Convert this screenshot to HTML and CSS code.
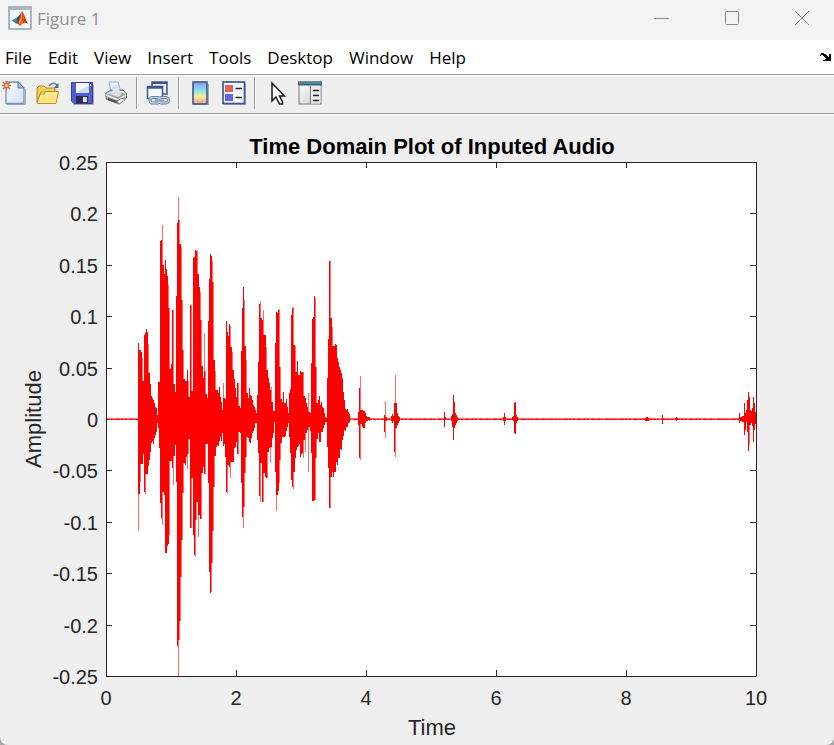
FILE: index.html
```html
<!DOCTYPE html>
<html lang="en">
  <head>
    <meta charset="utf-8">
    <title>Figure 1</title>
    <link rel="stylesheet" href="styles.css">
  </head>
  <body>
    <div class="window">

      <header class="titlebar">
        <svg class="logo" viewBox="0 0 24 24" aria-hidden="true">
          <defs>
            <linearGradient id="flame" x1="0" y1="0" x2="1" y2="0">
              <stop offset="0" stop-color="#7a1c10"/>
              <stop offset=".45" stop-color="#e8691c"/>
              <stop offset=".7" stop-color="#d43a12"/>
              <stop offset="1" stop-color="#a3200c"/>
            </linearGradient>
          </defs>
          <rect x="1" y="1" width="22" height="22" fill="#f4f6f8" stroke="#8f9aa8" stroke-width="1.4"/>
          <path d="M2 3h20" stroke="#a9b8ca" stroke-width="2"/>
          <path d="M3.500 14.500 9 11.500 12.500 9 10.500 16 8 17.500Z" fill="#3f7fb5"/>
          <path d="M9 11.500Q12 10 14 5.500L12 15 9.500 16Z" fill="#25507c"/>
          <path d="M14 5C16 7 17.500 13 20 18 17.500 16 15.500 16 12 20 11 18.500 9.500 17 8 17.500 11 15 12 9 14 5Z" fill="url(#flame)"/>
          <path d="M14 6.500Q14.500 12 12 18L10.500 17Q13 13 14 6.500Z" fill="#f8a13a"/>
        </svg>
        <h1 class="caption">Figure 1</h1>
        <div class="window-buttons">
          <button type="button" aria-label="Minimize">
            <svg viewBox="0 0 16 16"><path d="M0 8.500h15"/></svg>
          </button>
          <button type="button" aria-label="Maximize">
            <svg viewBox="0 0 16 16"><rect x="1.500" y="1.500" width="13" height="13" rx="1"/></svg>
          </button>
          <button type="button" aria-label="Close">
            <svg viewBox="0 0 16 16"><path d="M1 1l14 14M15 1L1 15"/></svg>
          </button>
        </div>
      </header>

      <nav class="menubar">
        <button type="button">File</button>
        <button type="button">Edit</button>
        <button type="button">View</button>
        <button type="button">Insert</button>
        <button type="button">Tools</button>
        <button type="button">Desktop</button>
        <button type="button">Window</button>
        <button type="button">Help</button>
        <button type="button" class="dock" aria-label="Dock figure">
          <svg viewBox="0 0 12 9"><path d="M0 3V2L1 1V0H4V1H6V2H7V3H8V4H9V1H11V8H3V7H5V6H6V5H5V4H4V3H3V2H1V3Z"/></svg>
        </button>
      </nav>

      <div class="toolbar" role="toolbar" aria-label="Figure toolbar">
        <button type="button" aria-label="New figure">
          <svg viewBox="0 0 24 24">
            <defs>
              <linearGradient id="sheet" x1="0" y1="0" x2="1" y2="1">
                <stop offset="0" stop-color="#fff"/><stop offset="1" stop-color="#cfe0f6"/>
              </linearGradient>
            </defs>
            <path d="M5 23.500H23.500V8" fill="none" stroke="#a8abb4"/>
            <path d="M4 1H16L22 7V22.500H4Z" fill="url(#sheet)" stroke="#7393bb" stroke-width="1.300"/>
            <path d="M16 1V7H22Z" fill="#9db9dd" stroke="#5878a4"/>
            <path d="M4.500 0V9M0 4.500H9M1 1L8 8M8 1L1 8" stroke="#dd7447" stroke-width="1.600"/>
            <circle cx="4.500" cy="4.500" r="2.200" fill="#ffc181" stroke="#d4622f"/>
          </svg>
        </button>
        <button type="button" aria-label="Open file">
          <svg viewBox="0 0 24 24">
            <path d="M13 5Q17 0 21 4" fill="none" stroke="#60809c" stroke-width="1.600"/>
            <path d="M22.500 2V7H17.500Z" fill="#496984"/>
            <path d="M1 21V7L3 5H8L10 7H19V11H5Z" fill="#f1cf56" stroke="#b58a20"/>
            <path d="M1 22L4 13H8L10 10.500H22.500L20 22.500H2Z" fill="#ffe681" stroke="#bd932b"/>
            <path d="M4 20L6 14.500H9L11 12H20" fill="none" stroke="#fff5b8"/>
          </svg>
        </button>
        <button type="button" aria-label="Save figure">
          <svg viewBox="0 0 24 24">
            <path d="M3 23.500H23.500V4" fill="none" stroke="#aaa"/>
            <path d="M1.500 1.500H22.500V22.500H4L1.500 20Z" fill="#555bd0" stroke="#333b9b"/>
            <path d="M6 2H19V12H6Z" fill="#f2f8ff"/>
            <path d="M6 12L19 4V12Z" fill="#cadcf3"/>
            <path d="M6 15H18V22H6Z" fill="#292b57"/>
            <path d="M13 16H17V21H13Z" fill="#e7edf6"/>
            <path d="M20 3H21V5H20Z" fill="#fff"/>
          </svg>
        </button>
        <button type="button" aria-label="Print figure">
          <svg viewBox="0 0 24 24">
            <path d="M5 1H14L17 11H7Z" fill="#f1f6ff" stroke="#91a5ca"/>
            <path d="M2 12L7 9H19L22.500 12V17L15 23 2 18Z" fill="#a0a1a4" stroke="#6f7175"/>
            <path d="M2 12L8 10H19L22 12 14 16Z" fill="#dcdcdc"/>
            <path d="M7 4H14L16 11H9Z" fill="#d5e3fb"/>
            <path d="M2 14L14 19 22 14" fill="none" stroke="#ededed" stroke-width="1.500"/>
            <path d="M4 18L13 21" stroke="#4b4d52" stroke-width="2"/>
            <path d="M13 20L18 17 21 19 15 23Z" fill="#f7f7f7" stroke="#888"/>
            <path d="M17 14L20 13" stroke="#85b65b" stroke-width="2"/>
          </svg>
        </button>
        <span class="separator"></span>
        <button type="button" aria-label="Link plot">
          <svg viewBox="0 0 24 24">
            <rect x="6" y="1" width="15" height="12" fill="#e8edf5" stroke="#3d5688" stroke-width="1.500"/>
            <path d="M6 2H21" stroke="#3d5688" stroke-width="2"/>
            <rect x="1.500" y="5.500" width="15" height="12" fill="#f7f9fc" stroke="#3d5688" stroke-width="1.500"/>
            <path d="M1.500 6.500H16.500" stroke="#3d5688" stroke-width="2.500"/>
            <rect x="4" y="16.500" width="10" height="5.500" rx="2.750" fill="#e4ebf4" stroke="#586f92" stroke-width="3"/>
            <rect x="13" y="16.500" width="9.500" height="5.500" rx="2.750" fill="#e4ebf4" stroke="#586f92" stroke-width="3"/>
            <rect x="4" y="16.500" width="10" height="5.500" rx="2.750" fill="none" stroke="#bdcee3" stroke-width="1.400"/>
            <rect x="13" y="16.500" width="9.500" height="5.500" rx="2.750" fill="none" stroke="#bdcee3" stroke-width="1.400"/>
            <path d="M9 19.200H18" stroke="#8ea6c6" stroke-width="2"/>
          </svg>
        </button>
        <span class="separator"></span>
        <button type="button" aria-label="Insert colorbar">
          <svg viewBox="0 0 24 24">
            <defs>
              <linearGradient id="bar" x1="0" y1="0" x2="0" y2="1">
                <stop offset="0" stop-color="#9195ed"/><stop offset=".35" stop-color="#83dff0"/>
                <stop offset=".65" stop-color="#f3f29b"/><stop offset="1" stop-color="#f39b86"/>
              </linearGradient>
            </defs>
            <path d="M6 24H20.500V3" fill="none" stroke="#aaa"/>
            <rect x="5" y="1" width="14" height="22" fill="url(#bar)" stroke="#3e5890" stroke-width="1.600"/>
          </svg>
        </button>
        <button type="button" aria-label="Insert legend">
          <svg viewBox="0 0 24 24">
            <path d="M2 23.500H23.500V3" fill="none" stroke="#aaa"/>
            <rect x="1" y="1" width="21.500" height="21.500" fill="#f5f8ff" stroke="#3e5890" stroke-width="1.700"/>
            <rect x="3" y="4" width="8" height="7" fill="#e56162"/>
            <rect x="3" y="13" width="8" height="7" fill="#6265e5"/>
            <path d="M13.500 7.500H20M13.500 16.500H20" stroke="#222" stroke-width="1.500"/>
          </svg>
        </button>
        <span class="separator"></span>
        <button type="button" aria-label="Edit plot">
          <svg viewBox="0 0 24 24">
            <path d="M8 2V20L12 16 15.500 23H18.500V21L15.500 15H20.500Z" fill="#fff" stroke="#171717" stroke-width="1.500"/>
          </svg>
        </button>
        <button type="button" aria-label="Open property inspector">
          <svg viewBox="0 0 24 24">
            <defs>
              <linearGradient id="pane" x1="0" y1="0" x2="1" y2="1">
                <stop offset="0" stop-color="#fff"/><stop offset="1" stop-color="#c9c9c9"/>
              </linearGradient>
            </defs>
            <rect x="1" y="1" width="22" height="22" fill="url(#pane)" stroke="#777"/>
            <path d="M0 2.500H24" stroke="#386580" stroke-width="4"/>
            <path d="M1 2H23" stroke="#76a5bf"/>
            <path d="M12.500 5V23" stroke="#777"/>
            <rect x="13" y="5" width="9.500" height="17.500" fill="#ececec"/>
            <path d="M15 9.500H21M15 14.500H21M15 19.500H21" stroke="#222" stroke-width="1.600"/>
          </svg>
        </button>
      </div>

      <main class="figure">
        <svg class="chart" viewBox="0 114 834 631" role="img" aria-label="Time Domain Plot of Inputed Audio">
          <rect class="plot-area" x="106" y="162" width="651" height="515"/>
          <path class="axes" d="M106.500 162.500H756.500V676.500H106.500Z"/>
          <path id="ticks" class="axes"/>
          <path id="wave-edge" class="wave-edge"/>
          <path id="wave" class="wave"/>
          <path class="quiet" d="M107 419.500H756"/>
          <text class="heading" x="432" y="154">Time Domain Plot of Inputed Audio</text>
          <g id="x-labels" class="x-labels"></g>
          <g id="y-labels" class="y-labels"></g>
          <text class="axis-name" x="432" y="735">Time</text>
          <text class="axis-name" transform="translate(41 419) rotate(-90)">Amplitude</text>
        </svg>
      </main>

    </div>
    <script src="chart.js"></script>
  </body>
</html>
```

FILE: styles.css
```css
/* General styles */

* {
  box-sizing: border-box;
}

body {
  margin: 0;
  background-color: #a9a9a9;
  font-family: "Open Sans", "Noto Sans", sans-serif;
}

button {
  margin: 0;
  padding: 0;
  border: 0;
  background: none;
  color: inherit;
  font: inherit;
}

svg {
  display: block;
}

.window {
  min-height: 100vh;
  background-color: #efefef;
  border-radius: 0 0 8px 8px;
  overflow: hidden;
}

/* Title bar */

.titlebar {
  display: flex;
  align-items: center;
  height: 40px;
  padding: 0 24px 4px 8px;
  background-color: #f3f3f3;
}

.logo {
  width: 24px;
  height: 24px;
}

.caption {
  margin: 0 0 0 5px;
  color: #8f8f8f;
  font-size: 17px;
  font-weight: 400;
}

.window-buttons {
  display: flex;
  gap: 54px;
  margin-left: auto;
}

.window-buttons svg {
  width: 16px;
  height: 16px;
  fill: none;
  stroke: #8b8b8b;
}

/* Menu bar */

.menubar {
  display: flex;
  align-items: center;
  gap: 16px;
  height: 34px;
  padding: 0 2px 0 5px;
  background-color: #fff;
  color: #000;
  font-size: 17px;
}

.dock {
  margin-left: auto;
}

.dock svg {
  width: 12px;
  height: 9px;
}

/* Toolbar */

.toolbar {
  display: flex;
  align-items: center;
  gap: 10px;
  height: 40px;
  padding: 0 2px 2px;
  border-top: 1px solid #999;
  border-bottom: 1px solid #999;
  box-shadow: inset 0 1px #fff, 0 1px #fff;
}

.toolbar svg {
  width: 24px;
  height: 24px;
}

.separator {
  width: 2px;
  height: 32px;
  margin: 0 -2px;
  border-left: 1px solid #999;
  border-right: 1px solid #fff;
}

/* Chart */

.chart {
  width: 100%;
  font-family: "Liberation Sans", Arial, sans-serif;
  font-size: 20px;
  fill: #262626;
}

.plot-area {
  fill: #fff;
}

.axes {
  fill: none;
  stroke: #262626;
}

.wave {
  fill: #f00;
}

.wave-edge {
  fill: #ff6a6a;
}

.quiet {
  stroke: #f00;
  stroke-dasharray: 3 1 2 2 5 1;
}

.heading {
  fill: #000;
  font-size: 22px;
  font-weight: 700;
  text-anchor: middle;
}

.axis-name {
  font-size: 22px;
  text-anchor: middle;
}

.x-labels {
  text-anchor: middle;
}

.y-labels {
  text-anchor: end;
}
```

FILE: chart.js
```js
// plot box
const left = 106, right = 756, top_ = 162, bottom = 676;

// highest and lowest point of the signal, one pair per column
const bursts = [
  { x: 138, columns: `
    343 531,350 494,
    350 482,352 464,358 464,381 454,335 492,333 494,329 474,332 474,344 466,373 460,
    384 452,396 443,398 441,400 444,403 438,407 435,408 432,415 423,382 428,382 448,
    241 503,240 518,225 525,265 492,274 495,260 553,269 553,276 546,285 544,308 535,
    369 461,364 461,310 468,310 485,384 456,392 445,296 482,223 646,197 676,220 640,
    244 621,246 577,300 540,350 493,379 463,381 465,381 457,370 469,381 454,397 439,
    305 528,305 528,391 478,258 535,257 555,250 556,251 520,251 502,274 537,287 515,
    292 519,320 519,366 473,378 467,333 474,371 474,394 444,398 444,321 483,279 572,
    254 593,256 592,261 563,282 531,360 487,371 456,390 447,390 445,393 446,387 441,
    397 437,402 441,410 433,383 446,398 444,399 457,321 492,332 493,336 465,324 467,
    326 478,347 462,352 462,370 462,379 448,388 447,397 442,383 454,383 454,406 432,
    408 433,351 483,308 517,287 528,300 507,346 473,360 457,393 437,398 438,388 442,
    395 443,396 438,400 433,405 431,407 428,410 423,413 423,395 440,362 453,304 496,
    301 502,318 463,320 502,310 502,335 473,335 477,347 478,370 478,378 452,383 448,
    390 463,387 447,402 438,411 433,411 422,343 472,312 511,313 495,310 491,309 483,
    367 460,399 443,402 437,392 437,403 437,403 436,399 431,407 427,413 423,393 437,
    389 453,315 480,308 487,307 489,345 472,346 458,372 450,361 447,375 446,375 444,
    371 457,372 454,372 453,372 458,396 440,398 452,403 433,407 430,393 472,412 427,
    413 431,363 453,319 501,317 501,296 500,298 500,367 458,403 439,400 433,396 442,
    405 442,402 432,407 432,408 428,413 425,417 422,418 422,378 447,339 468,261 508,
    261 508,318 477,327 472,346 477,346 472,344 472,345 462,358 465,362 458,367 458,
    370 449,373 450,378 440,392 436,400 430,409 431,410 427,409 427,412 423,414 422` },
  { x: 358, columns: `
    412 425,388 458,376 460,410 424,410 427,411 428,411 428,413 423,416 421,417 421,417 420,417 421` },
  { x: 384, columns: `415 432,401 438,417 421` },
  { x: 391, columns: `416 421,414 423,416 421,403 452,375 457,403 428,413 425,416 423,417 421` },
  { x: 444, columns: `412 427,417 420` },
  { x: 451, columns: `416 421,414 427,395 440,402 428,413 425,415 423,417 421` },
  { x: 503, columns: `417 421,413 425,417 421` },
  { x: 512, columns: `417 420,416 421,403 433,402 434,415 423,417 421` },
  { x: 645, columns: `418 421,417 421,417 421,418 421` },
  { x: 662, columns: `415 424` },
  { x: 675, columns: `418 420,417 421,418 420` },
  { x: 739, columns: `
    413 423,417 421,417 421,416 422,416 422,403 435,413 430,410 422,400 432,392 451,
    397 445,410 425,411 423,408 426,397 442,403 430,412 424` }
];

// a thin pale line runs through the quiet parts
let edge = `M${left + 1} 418H${right}V420H${left + 1}Z`;
let solid = '';

function column(x, high, low) {
  return `M${x} ${high}h1V${low}h-1Z`;
}

bursts.forEach(burst => {
  const points = burst.columns.split(',').map(pair => pair.trim().split(' ').map(Number));

  points.forEach(([high, low], i) => {
    const x = burst.x + i;
    const next = points[i + 1];
    edge += column(x, high, low);

    // a big drop to the next column leaves a pale edge
    if (next && next[0] - high > 14) {
      high = next[0];
    }
    if (next && low - next[1] > 14) {
      low = next[1];
    }
    solid += column(x, high, low);
  });
});

document.querySelector('#wave-edge').setAttribute('d', edge);
document.querySelector('#wave').setAttribute('d', solid);

// add one tick label
function addLabel(group, x, y, value) {
  const text = document.createElementNS('http://www.w3.org/2000/svg', 'text');
  text.setAttribute('x', x);
  text.setAttribute('y', y);
  text.textContent = value;
  document.querySelector(group).appendChild(text);
}

let ticks = '';

for (let i = 0; i <= 5; i++) {
  const x = left + Math.round((right - left) * i / 5);
  ticks += `M${x + 0.5} ${bottom}v-6M${x + 0.5} ${top_}v6`;
  addLabel('#x-labels', x, 705, i * 2);
}

for (let i = 0; i <= 10; i++) {
  const y = top_ + Math.round((bottom - top_) * i / 10);
  ticks += `M${left} ${y + 0.5}h6M${right} ${y + 0.5}h-6`;
  addLabel('#y-labels', 98, y + 8, (25 - i * 5) / 100);
}

document.querySelector('#ticks').setAttribute('d', ticks);
```
